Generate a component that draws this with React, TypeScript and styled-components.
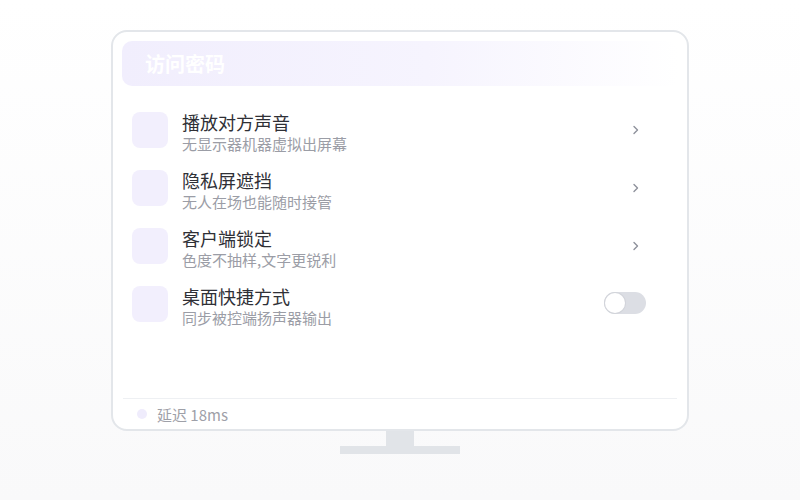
import React from "react";
import styled, { createGlobalStyle } from "styled-components";

const Global = createGlobalStyle`
  html, body { margin: 0; padding: 0; background: #fbfbfc; }
  body { font-family: "Noto Sans CJK SC", "Noto Sans", sans-serif; }
`;

const Page = styled.div`
  width: 800px;
  height: 500px;
  display: flex;
  flex-direction: column;
  align-items: center;
  padding-top: 30px;
  box-sizing: border-box;
  background: linear-gradient(180deg, #ffffff 0%, #f9f9fa 100%);
`;

const Monitor = styled.div`
  width: 578px;
  height: 401px;
  box-sizing: border-box;
  border: 2px solid #e3e6ea;
  border-radius: 16px;
  background: #ffffff;
  padding: 9px 9px 0;
  display: flex;
  flex-direction: column;
`;

const Header = styled.div`
  height: 45px;
  border-radius: 10px;
  background: linear-gradient(90deg, #f1eefd 0%, #f6f4fe 55%, rgba(255, 255, 255, 0) 100%);
  display: flex;
  align-items: center;
  padding-left: 23px;
  color: #ffffff;
  font-size: 20px;
  font-weight: 700;
`;

const List = styled.div`
  flex: 1;
  display: flex;
  flex-direction: column;
  padding: 26px 32px 0 10px;
`;

const Row = styled.div`
  height: 58px;
  display: flex;
  align-items: flex-start;
  gap: 14px;
`;

const IconBox = styled.div`
  width: 36px;
  height: 36px;
  border-radius: 8px;
  background: #f2effd;
  flex: none;
`;

const Texts = styled.div`
  flex: 1;
  display: flex;
  flex-direction: column;
  margin-top: -1px;
`;

const Title = styled.div`
  font-size: 18px;
  line-height: 22px;
  color: #2f3036;
`;

const Sub = styled.div`
  font-size: 15px;
  line-height: 22px;
  color: #9b9da6;
`;

const Chevron = styled.div`
  width: 42px;
  height: 36px;
  display: flex;
  align-items: center;
  justify-content: flex-end;
  padding-right: 6px;
  box-sizing: border-box;
  color: #8e919b;
`;

const Toggle = styled.div`
  width: 42px;
  height: 22px;
  margin-top: 6px;
  border-radius: 11px;
  background: #dcdee4;
  position: relative;
  flex: none;
`;

const Knob = styled.div`
  position: absolute;
  left: 1px;
  top: 1px;
  width: 20px;
  height: 20px;
  border-radius: 50%;
  background: #ffffff;
  box-shadow: 0 0 0 1px #d2d4da;
`;

const Footer = styled.div`
  height: 30px;
  border-top: 1px solid #eef0f3;
  margin: 0 1px;
  display: flex;
  align-items: center;
  gap: 10px;
  padding-left: 14px;
  font-size: 15px;
  color: #9ea0a8;
`;

const Dot = styled.div`
  width: 10px;
  height: 10px;
  border-radius: 50%;
  background: #efecfc;
`;

const Neck = styled.div`
  width: 28px;
  height: 15px;
  background: #e1e4e8;
`;

const Base = styled.div`
  width: 120px;
  height: 8px;
  background: #e1e4e8;
`;

const items = [
  { t: "播放对方声音", s: "无显示器机器虚拟出屏幕", kind: "chev" },
  { t: "隐私屏遮挡", s: "无人在场也能随时接管", kind: "chev" },
  { t: "客户端锁定", s: "色度不抽样,文字更锐利", kind: "chev" },
  { t: "桌面快捷方式", s: "同步被控端扬声器输出", kind: "toggle" },
];

const ChevronIcon = () => (
  <svg width="8" height="12" viewBox="0 0 8 12" fill="none">
    <path d="M2 2.5 L5.5 6 L2 9.5" stroke="currentColor" strokeWidth="1.4" strokeLinecap="round" strokeLinejoin="round" />
  </svg>
);

export default function App() {
  return (
    <>
      <Global />
      <Page>
        <Monitor>
          <Header>访问密码</Header>
          <List>
            {items.map((it) => (
              <Row key={it.t}>
                <IconBox />
                <Texts>
                  <Title>{it.t}</Title>
                  <Sub>{it.s}</Sub>
                </Texts>
                {it.kind === "chev" ? (
                  <Chevron>
                    <ChevronIcon />
                  </Chevron>
                ) : (
                  <Toggle>
                    <Knob />
                  </Toggle>
                )}
              </Row>
            ))}
          </List>
          <Footer>
            <Dot />
            <span>延迟 18ms</span>
          </Footer>
        </Monitor>
        <Neck />
        <Base />
      </Page>
    </>
  );
}
